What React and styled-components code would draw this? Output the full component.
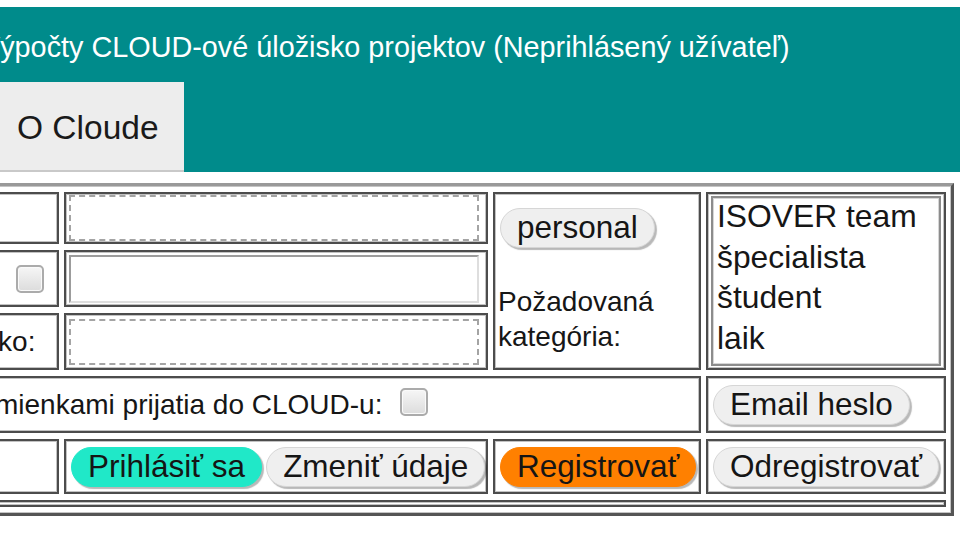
import React from 'react';
import styled, { createGlobalStyle } from 'styled-components';

const GlobalStyle = createGlobalStyle`
  html, body {
    margin: 0;
    padding: 0;
    background: #ffffff;
    overflow: hidden;
  }
  body {
    font-family: "Liberation Sans", Arial, sans-serif;
    color: #161616;
  }
`;

/* The page is wider than the window and scrolled sideways by 211px. */
const Page = styled.div`
  width: 1200px;
  margin-left: -211px;
  padding-top: 7px;
`;

const Header = styled.header`
  background: #008b8b;
  display: flex;
  flex-direction: column;
`;

const Title = styled.h1`
  box-sizing: border-box;
  height: 75px;
  margin: 0;
  padding: 5px 0 0 192px;
  display: flex;
  align-items: center;
  font-size: 28.8px;
  font-weight: normal;
  color: #ffffff;
  white-space: nowrap;
`;

const Tabs = styled.nav`
  display: flex;
  height: 90px;
  padding-left: 211px;
`;

const Tab = styled.a`
  box-sizing: border-box;
  width: 184px;
  display: flex;
  align-items: center;
  padding: 4px 0 0 17px;
  background: #ededed;
  border-bottom: 2px solid #c9c9c9;
  font-size: 33.5px;
  color: #1a1a1a;
  text-decoration: none;
`;

const FormTable = styled.table`
  margin-top: 11px;
  width: 1164px;
  table-layout: fixed;
  border-collapse: separate;
  border-spacing: 5px 6px;
  border: 3px solid #555555;
  border-top-color: #999999;
  border-left-color: #999999;
  box-shadow: inset 0 0 0 1px #c4c4c4;
  font-family: "Liberation Sans", Arial, sans-serif;
  font-size: 28px;
  color: #161616;
`;

const Row = styled.tr`
  height: ${(p) => p.$h}px;
`;

const Cell = styled.td`
  box-sizing: border-box;
  padding: ${(p) => p.$pad || '0 3px'};
  border: 2px solid #4c4c4c;
  box-shadow: inset 0 0 0 1px #c2c2c2;
  vertical-align: middle;
  line-height: 35px;
  white-space: nowrap;
`;

const TextBox = styled.input`
  box-sizing: border-box;
  display: block;
  width: 410px;
  height: ${(p) => (p.$dashed ? 46 : 48)}px;
  margin: 0;
  padding: 0 6px;
  background: #ffffff;
  font: inherit;
  border: 2px ${(p) => (p.$dashed ? 'dashed' : 'solid')} #a4a4a4;
  ${(p) =>
    !p.$dashed &&
    `
    border-color: #9c9c9c #dedede #dedede #9c9c9c;
  `}
  outline: none;
`;

const CheckBox = styled.input.attrs({ type: 'checkbox' })`
  appearance: none;
  box-sizing: border-box;
  flex: none;
  width: 28px;
  height: 28px;
  margin: 0 ${(p) => p.$right || 0}px ${(p) => p.$lift || 0}px ${(p) => p.$left || 0}px;
  border: 2px solid #ababab;
  border-radius: 5px;
  background: linear-gradient(#f6f6f6, #dcdcdc);
  box-shadow: inset 0 0 0 1px #fafafa;
`;

const LabelLine = styled.div`
  display: flex;
  align-items: center;
  justify-content: ${(p) => (p.$end ? 'flex-end' : 'flex-start')};
`;

const Button = styled.button`
  box-sizing: border-box;
  flex: none;
  height: 40px;
  margin: 0 2px;
  padding: 0 16px;
  border: 1px solid #d0d0d0;
  border-radius: 20px;
  background: ${(p) =>
    p.$tone === 'login' ? '#20e8c8' : p.$tone === 'register' ? '#ff8000' : '#efefef'};
  border-color: ${(p) =>
    p.$tone === 'login' ? '#20e8c8' : p.$tone === 'register' ? '#ff8000' : '#d6d6d6'};
  box-shadow: 2px 2px 1px rgba(0, 0, 0, 0.28);
  font-family: "Liberation Sans", Arial, sans-serif;
  font-size: 31.5px;
  line-height: 1;
  color: #151515;
  white-space: nowrap;
  cursor: pointer;
`;

const ButtonRow = styled.div`
  display: flex;
  align-items: center;
`;

const CategoryBox = styled.div`
  display: flex;
  flex-direction: column;
  align-items: flex-start;
`;

const CategoryLabel = styled.div`
  margin-top: 36px;
  line-height: 35px;
  white-space: normal;
`;

const ListBox = styled.div`
  box-sizing: border-box;
  height: 170px;
  padding: 0 3px 0 4px;
  border: 2px solid #8c8c8c;
  box-shadow: inset 0 0 0 1px #d6d6d6;
  background: #ffffff;
  font-size: 31.8px;
  overflow: hidden;
`;

const ListOption = styled.div`
  height: 40.7px;
  line-height: 37px;
  white-space: nowrap;
`;

const categories = ['ISOVER team', 'špecialista', 'študent', 'laik'];

export default function App() {
  return (
    <>
      <GlobalStyle />
      <Page>
        <Header>
          <Title>Výpočty CLOUD-ové úložisko projektov (Neprihlásený užívateľ)</Title>
          <Tabs>
            <Tab href="#">O Cloude</Tab>
          </Tabs>
        </Header>

        <FormTable>
          <colgroup>
            <col style={{ width: 262 }} />
            <col style={{ width: 424 }} />
            <col style={{ width: 208 }} />
            <col style={{ width: 240 }} />
          </colgroup>
          <tbody>
            <Row $h={52}>
              <Cell />
              <Cell>
                <TextBox $dashed />
              </Cell>
              <Cell rowSpan={3}>
                <CategoryBox>
                  <Button type="button">personal</Button>
                  <CategoryLabel>
                    Požadovaná
                    <br />
                    kategória:
                  </CategoryLabel>
                </CategoryBox>
              </Cell>
              <Cell rowSpan={3} $pad="2px 3px">
                <ListBox role="listbox">
                  {categories.map((c) => (
                    <ListOption key={c} role="option">
                      {c}
                    </ListOption>
                  ))}
                </ListBox>
              </Cell>
            </Row>
            <Row $h={57}>
              <Cell>
                <LabelLine $end>
                  <CheckBox $right={10} />
                </LabelLine>
              </Cell>
              <Cell>
                <TextBox type="password" />
              </Cell>
            </Row>
            <Row $h={57}>
              <Cell>Meno a priezvisko:</Cell>
              <Cell>
                <TextBox $dashed />
              </Cell>
            </Row>
            <Row $h={57}>
              <Cell colSpan={3}>
                <LabelLine>
                  Súhlasím s podmienkami prijatia do CLOUD-u:
                  <CheckBox $left={18} $lift={6} />
                </LabelLine>
              </Cell>
              <Cell>
                <Button type="button">Email heslo</Button>
              </Cell>
            </Row>
            <Row $h={55}>
              <Cell />
              <Cell>
                <ButtonRow>
                  <Button type="button" $tone="login">Prihlásiť sa</Button>
                  <Button type="button">Zmeniť údaje</Button>
                </ButtonRow>
              </Cell>
              <Cell>
                <Button type="button" $tone="register">Registrovať</Button>
              </Cell>
              <Cell>
                <Button type="button">Odregistrovať</Button>
              </Cell>
            </Row>
            <Row $h={7}>
              <Cell colSpan={4} $pad="0" />
            </Row>
          </tbody>
        </FormTable>
      </Page>
    </>
  );
}
